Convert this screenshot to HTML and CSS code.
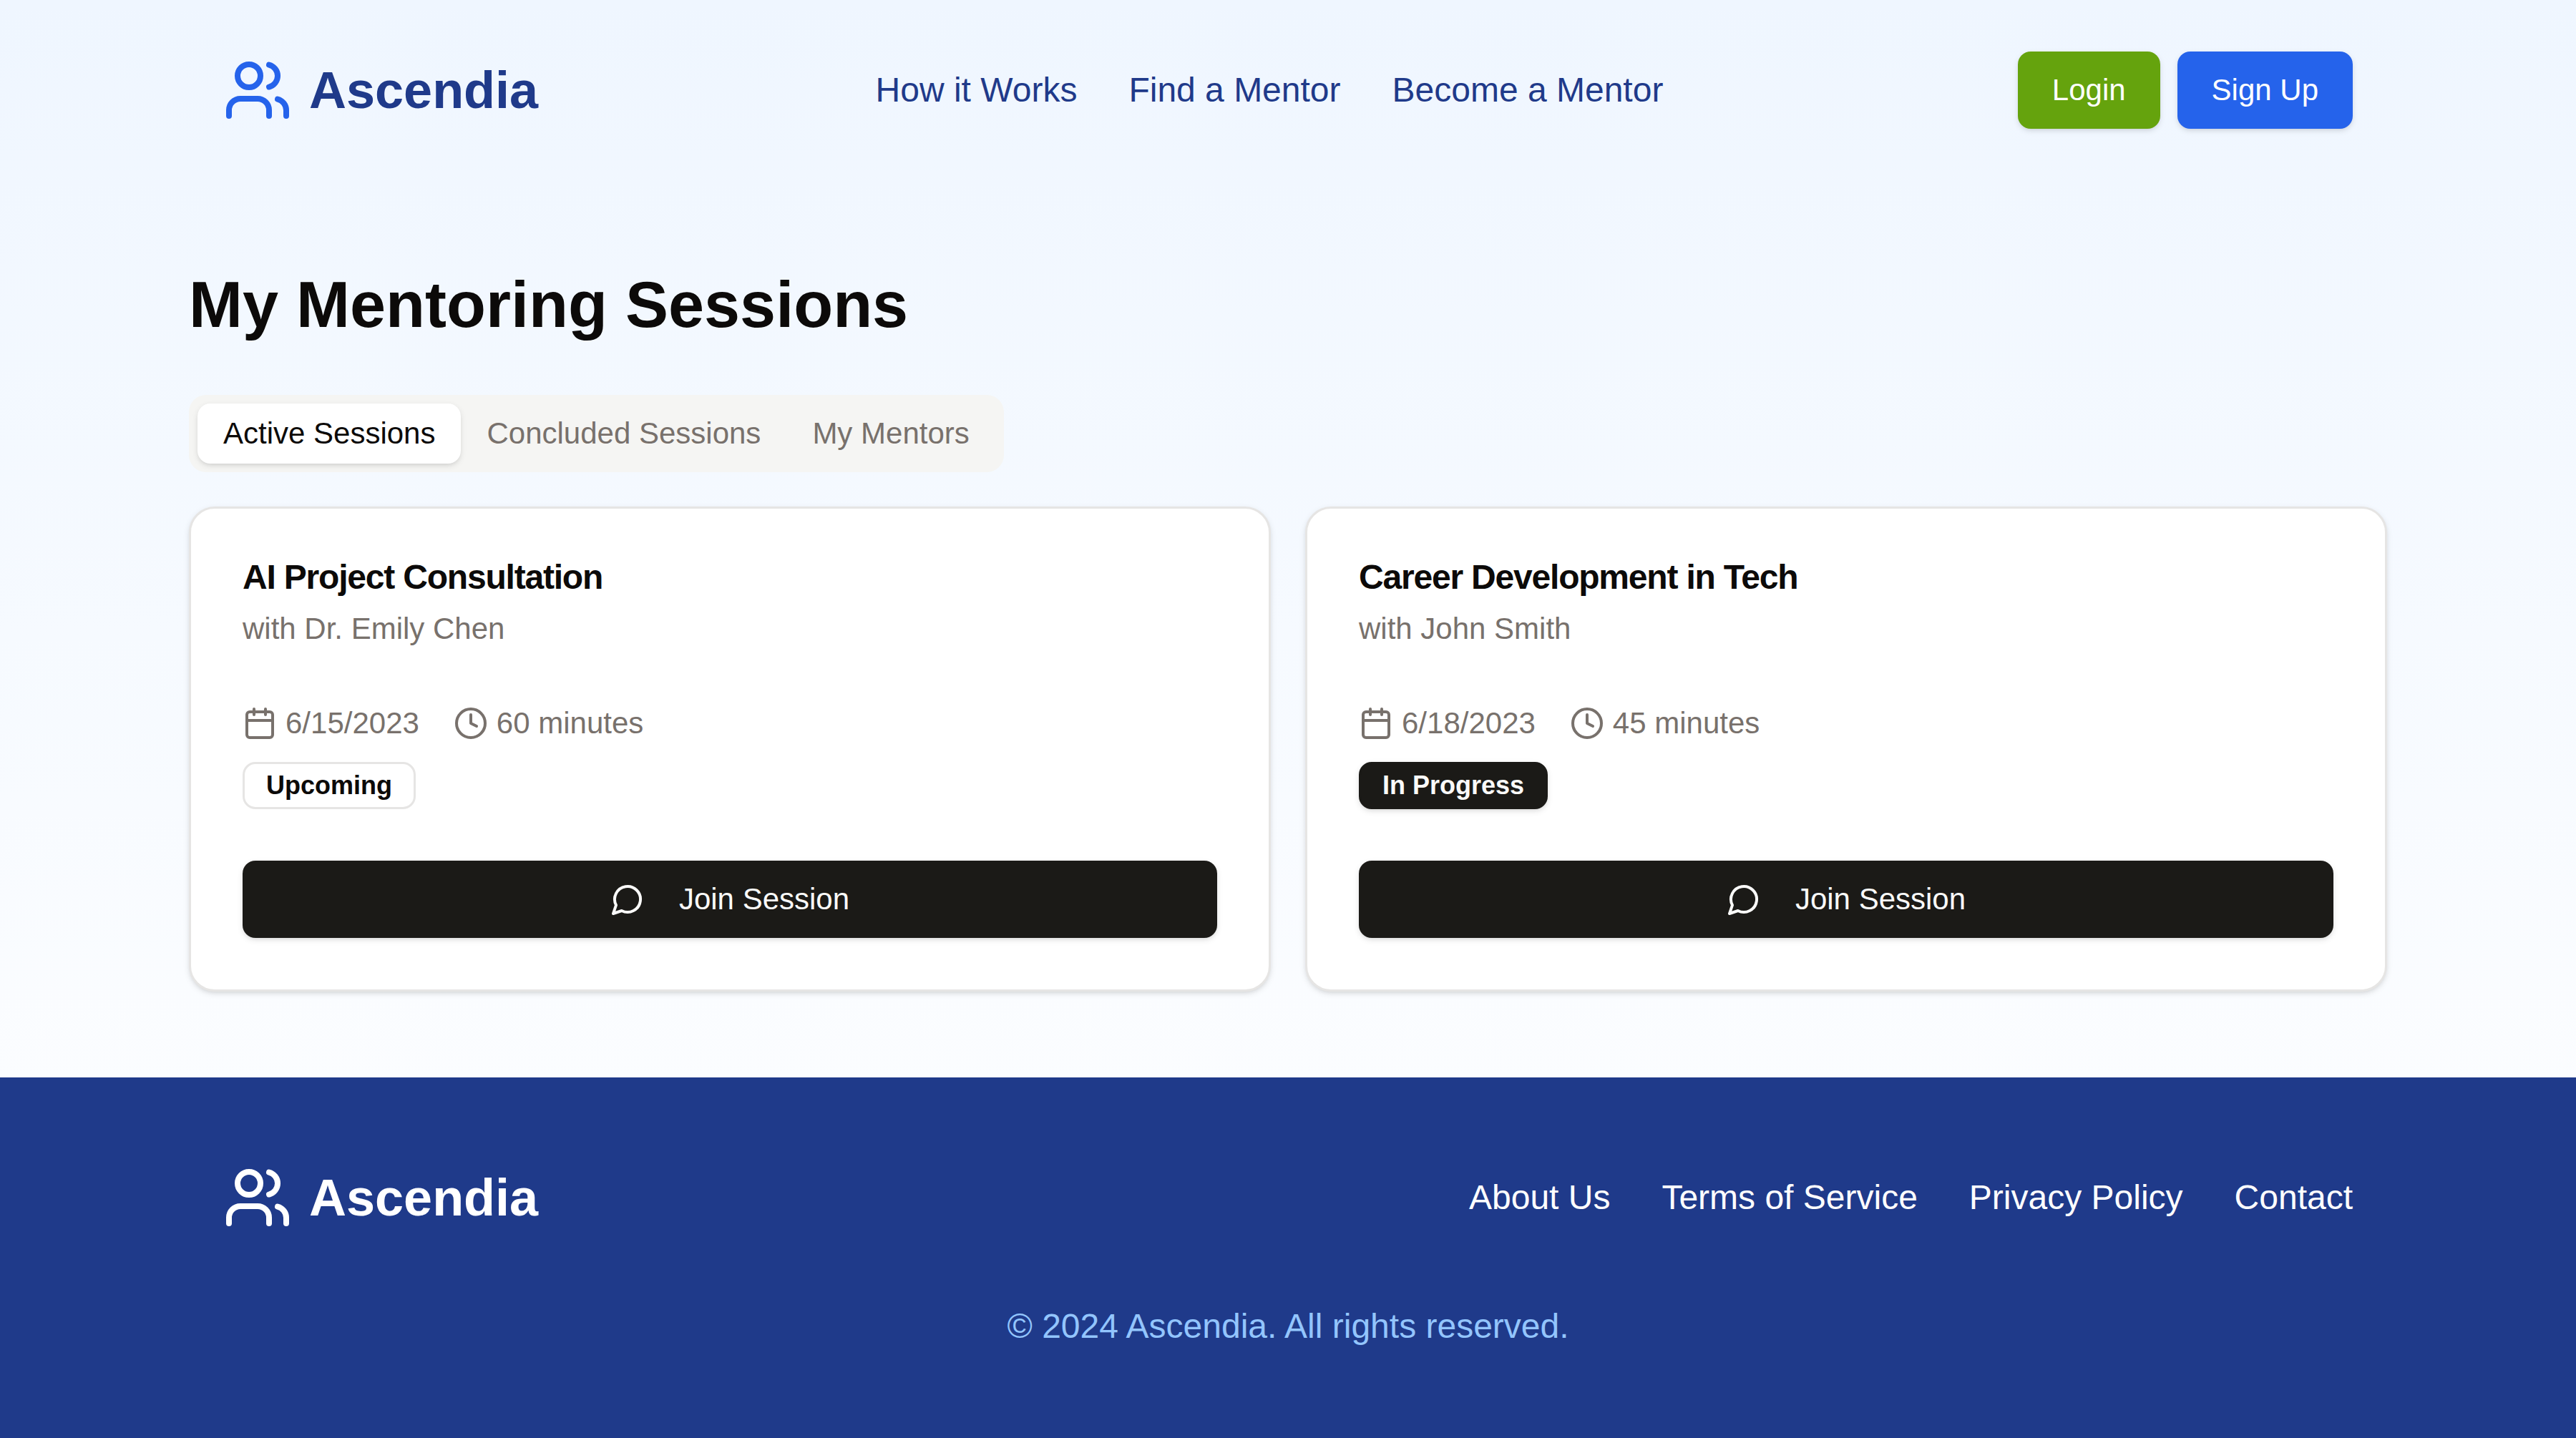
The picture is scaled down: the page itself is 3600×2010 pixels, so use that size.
FILE: index.html
```html
<!DOCTYPE html>
<html lang="en">
<head>
  <meta charset="utf-8">
  <meta name="viewport" content="width=device-width, initial-scale=1">
  <title>My Mentoring Sessions – Ascendia</title>
  <link rel="stylesheet" href="styles.css">
</head>
<body>
  <svg class="sprite" aria-hidden="true">
    <symbol id="users" viewBox="0 0 24 24">
      <path d="M16 21v-2a4 4 0 0 0-4-4H6a4 4 0 0 0-4 4v2"/>
      <circle cx="9" cy="7" r="4"/>
      <path d="M22 21v-2a4 4 0 0 0-3-3.87"/>
      <path d="M16 3.13a4 4 0 0 1 0 7.75"/>
    </symbol>
    <symbol id="calendar" viewBox="0 0 24 24">
      <path d="M8 2v4M16 2v4"/>
      <rect x="3" y="4" width="18" height="18" rx="2"/>
      <path d="M3 10h18"/>
    </symbol>
    <symbol id="clock" viewBox="0 0 24 24">
      <circle cx="12" cy="12" r="10"/>
      <path d="M12 6v6l4 2"/>
    </symbol>
    <symbol id="message" viewBox="0 0 24 24">
      <path d="M7.9 20A9 9 0 1 0 4 16.1L2 22Z"/>
    </symbol>
  </svg>

  <header class="container site-header">
    <a class="logo" href="#">
      <svg class="icon logo-icon" aria-hidden="true"><use href="#users"/></svg>
      <span>Ascendia</span>
    </a>
    <nav class="nav" aria-label="Main">
      <a href="#">How it Works</a>
      <a href="#">Find a Mentor</a>
      <a href="#">Become a Mentor</a>
    </nav>
    <div class="actions">
      <button class="button button-login" type="button">Login</button>
      <button class="button button-signup" type="button">Sign Up</button>
    </div>
  </header>

  <main class="main">
    <h1 class="page-title">My Mentoring Sessions</h1>
    <div class="tabs" role="tablist">
      <button class="tab tab-active" type="button" role="tab" aria-selected="true">Active Sessions</button>
      <button class="tab" type="button" role="tab" aria-selected="false">Concluded Sessions</button>
      <button class="tab" type="button" role="tab" aria-selected="false">My Mentors</button>
    </div>
    <div class="cards">
      <article class="card">
        <div class="card-header">
          <h2 class="card-title">AI Project Consultation</h2>
          <p class="card-text">with Dr. Emily Chen</p>
        </div>
        <div class="card-details">
          <div class="meta">
            <span class="meta-item"><svg class="icon" aria-hidden="true"><use href="#calendar"/></svg><span>6/15/2023</span></span>
            <span class="meta-item"><svg class="icon" aria-hidden="true"><use href="#clock"/></svg><span>60 minutes</span></span>
          </div>
          <span class="badge">Upcoming</span>
        </div>
        <button class="button button-join" type="button"><svg class="icon" aria-hidden="true"><use href="#message"/></svg><span>Join Session</span></button>
      </article>
      <article class="card">
        <div class="card-header">
          <h2 class="card-title">Career Development in Tech</h2>
          <p class="card-text">with John Smith</p>
        </div>
        <div class="card-details">
          <div class="meta">
            <span class="meta-item"><svg class="icon" aria-hidden="true"><use href="#calendar"/></svg><span>6/18/2023</span></span>
            <span class="meta-item"><svg class="icon" aria-hidden="true"><use href="#clock"/></svg><span>45 minutes</span></span>
          </div>
          <span class="badge badge-solid">In Progress</span>
        </div>
        <button class="button button-join" type="button"><svg class="icon" aria-hidden="true"><use href="#message"/></svg><span>Join Session</span></button>
      </article>
    </div>
  </main>

  <footer class="site-footer">
    <div class="container footer-row">
      <a class="logo" href="#">
        <svg class="icon logo-icon" aria-hidden="true"><use href="#users"/></svg>
        <span>Ascendia</span>
      </a>
      <nav class="nav" aria-label="Footer">
        <a href="#">About Us</a>
        <a href="#">Terms of Service</a>
        <a href="#">Privacy Policy</a>
        <a href="#">Contact</a>
      </nav>
    </div>
    <p class="copyright">© 2024 Ascendia. All rights reserved.</p>
  </footer>
</body>
</html>
```

FILE: styles.css
```css
:root {
  --blue-50: #eff6ff;
  --blue-300: #93c5fd;
  --blue-600: #2563eb;
  --blue-900: #1f3a8a;
  --green: #65a30d;
  --ink: #0c0a09;
  --solid: #1b1a17;
  --solid-text: #fafaf9;
  --muted: #78716c;
  --muted-bg: #f5f5f3;
  --line: #e6e5e4;
  --shadow: 0 3px 9px rgb(0 0 0 / 0.1), 0 3px 6px -3px rgb(0 0 0 / 0.1);
}

*,
*::before,
*::after {
  box-sizing: border-box;
}

body {
  display: flex;
  flex-direction: column;
  min-height: 100vh;
  margin: 0;
  background: linear-gradient(to bottom, var(--blue-50), #fff);
  color: var(--ink);
  font-family: "Liberation Sans", Arial, Helvetica, sans-serif;
  font-size: 48px;
  line-height: 72px;
}

h1,
h2,
p {
  margin: 0;
}

a {
  color: inherit;
  text-decoration: none;
}

button {
  border: 0;
  font: inherit;
  cursor: pointer;
}

.sprite {
  display: none;
}

.icon {
  flex: none;
  width: 48px;
  height: 48px;
  fill: none;
  stroke: currentColor;
  stroke-width: 2;
  stroke-linecap: round;
  stroke-linejoin: round;
}

.container {
  width: 100%;
  max-width: 3072px;
  margin: 0 auto;
  padding: 0 48px;
}

.site-header,
.footer-row {
  display: flex;
  flex-wrap: wrap;
  align-items: center;
  justify-content: space-between;
  gap: 24px;
}

.site-header {
  padding-top: 72px;
  padding-bottom: 72px;
  color: var(--blue-900);
}

.logo {
  display: flex;
  align-items: center;
  gap: 24px;
  font-size: 72px;
  font-weight: 700;
  line-height: 96px;
}

.logo-icon {
  width: 96px;
  height: 96px;
}

.site-header .logo-icon {
  color: var(--blue-600);
}

.nav {
  display: flex;
  flex-wrap: wrap;
  gap: 0 72px;
}

.actions {
  display: flex;
  gap: 24px;
  padding-left: 24px;
}

.button {
  display: flex;
  align-items: center;
  justify-content: center;
  gap: 48px;
  padding: 24px 48px;
  border-radius: 18px;
  box-shadow: var(--shadow);
  color: #fff;
  font-size: 42px;
  line-height: 60px;
}

.button-login {
  background: var(--green);
}

.button-signup {
  background: var(--blue-600);
}

.button-join {
  width: 100%;
  background: var(--solid);
  color: var(--solid-text);
}

.main {
  flex: 1;
  width: 100%;
  max-width: 3072px;
  margin: 0 auto;
  padding: 120px 0;
}

.page-title {
  margin-bottom: 72px;
  font-size: 90px;
  font-weight: 700;
  line-height: 108px;
}

.tabs {
  display: inline-flex;
  margin-bottom: 48px;
  padding: 12px;
  border-radius: 24px;
  background: var(--muted-bg);
  vertical-align: top;
}

.tab {
  padding: 12px 36px;
  border-radius: 18px;
  background: transparent;
  color: var(--muted);
  font-size: 42px;
  line-height: 60px;
}

.tab-active {
  background: #fff;
  box-shadow: var(--shadow);
  color: var(--ink);
}

.cards {
  display: grid;
  grid-template-columns: repeat(2, 1fr);
  gap: 48px;
}

.card {
  display: flex;
  flex-direction: column;
  gap: 72px;
  padding: 72px;
  border: 3px solid var(--line);
  border-radius: 36px;
  background: #fff;
  box-shadow: var(--shadow);
}

.card-header {
  display: grid;
  gap: 18px;
}

.card-title {
  font-size: 48px;
  font-weight: 600;
  letter-spacing: -0.025em;
  line-height: 48px;
}

.card-text,
.meta {
  color: var(--muted);
  font-size: 42px;
  line-height: 60px;
}

.card-details {
  display: flex;
  flex-direction: column;
  align-items: flex-start;
  gap: 24px;
}

.meta {
  display: flex;
  gap: 48px;
}

.meta-item {
  display: flex;
  align-items: center;
  gap: 12px;
}

.badge {
  padding: 6px 30px;
  border: 3px solid var(--line);
  border-radius: 18px;
  font-size: 36px;
  font-weight: 600;
  line-height: 48px;
}

.badge-solid {
  border-color: var(--solid);
  background: var(--solid);
  box-shadow: var(--shadow);
  color: var(--solid-text);
}

.site-footer {
  padding: 120px 0;
  background: var(--blue-900);
  color: #fff;
}

.copyright {
  margin-top: 96px;
  color: var(--blue-300);
  text-align: center;
}
```
